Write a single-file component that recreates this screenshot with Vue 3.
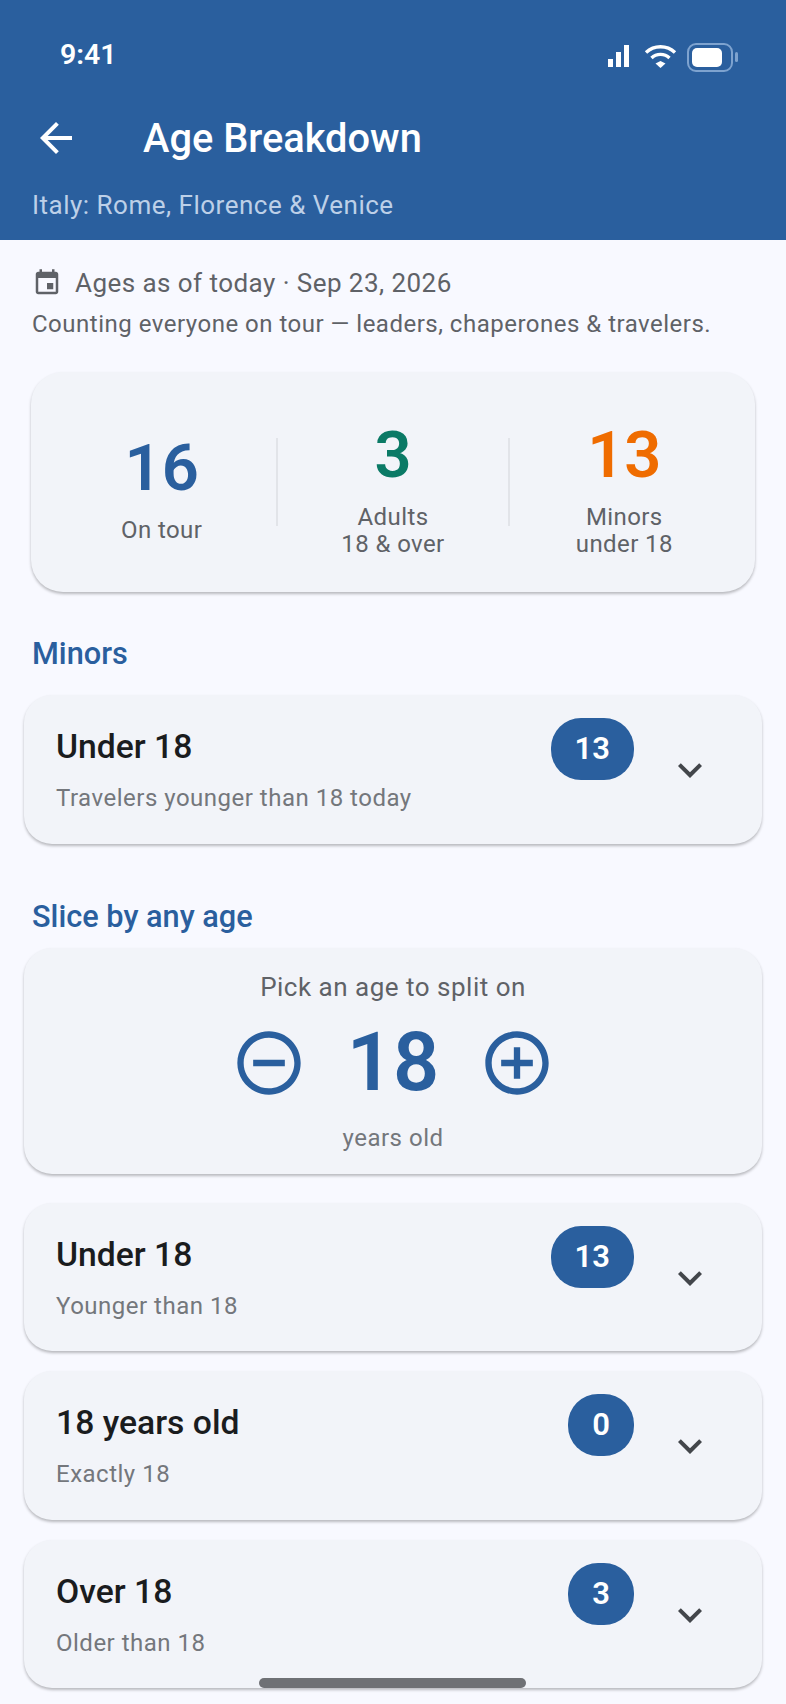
<script setup>
const stats = [
  { value: '16', lines: ['On tour'], tone: 'blue' },
  { value: '3', lines: ['Adults', '18 & over'], tone: 'green' },
  { value: '13', lines: ['Minors', 'under 18'], tone: 'orange' },
]
const slices = [
  { title: 'Under 18', sub: 'Younger than 18', count: '13' },
  { title: '18 years old', sub: 'Exactly 18', count: '0' },
  { title: 'Over 18', sub: 'Older than 18', count: '3' },
]
</script>

<template>
  <div class="page">
    <header class="header">
      <div class="status">
        <span class="time">9:41</span>
        <svg class="status-icons" width="132" height="30" viewBox="0 0 132 30">
          <rect x="0" y="16" width="5" height="8" fill="#fff" />
          <rect x="8" y="9" width="5" height="15" fill="#fff" />
          <rect x="16" y="2" width="5" height="22" fill="#fff" />
          <path d="M38 9.5a21 21 0 0 1 29 0" fill="none" stroke="#fff" stroke-width="3.4" />
          <path d="M43.5 15a13 13 0 0 1 18 0" fill="none" stroke="#fff" stroke-width="3.4" />
          <path d="M47.5 20.5l5-2.6 5 2.6-5 4.5z" fill="#fff" />
          <rect x="80" y="1" width="44" height="27" rx="8" fill="none" stroke="#7ea3cf" stroke-width="2" />
          <rect x="84" y="5" width="30" height="19" rx="5" fill="#fff" />
          <rect x="127" y="9" width="3" height="10" rx="1.5" fill="#7ea3cf" />
        </svg>
      </div>
      <div class="bar">
        <svg class="back" width="48" height="48" viewBox="0 0 24 24">
          <path fill="#fff" d="M20 11H7.83l5.59-5.59L12 4l-8 8 8 8 1.41-1.41L7.83 13H20v-2z" />
        </svg>
        <h1 class="title">Age Breakdown</h1>
      </div>
      <p class="trip">Italy: Rome, Florence &amp; Venice</p>
    </header>

    <main class="content">
      <div class="date">
        <svg width="30" height="30" viewBox="0 0 24 24">
          <path fill="#5f6267" d="M17 12h-5v5h5v-5zM16 1v2H8V1H6v2H5c-1.11 0-1.99.9-1.99 2L3 19c0 1.1.89 2 2 2h14c1.1 0 2-.9 2-2V5c0-1.1-.9-2-2-2h-1V1h-2zm3 18H5V8h14v11z" />
        </svg>
        <span>Ages as of today · Sep 23, 2026</span>
      </div>
      <p class="counting">Counting everyone on tour — leaders, chaperones &amp; travelers.</p>

      <section class="card summary">
        <template v-for="(s, i) in stats" :key="s.value">
          <div v-if="i" class="divider"></div>
          <div class="stat">
            <div class="num" :class="s.tone">{{ s.value }}</div>
            <div class="label">
              <div v-for="l in s.lines" :key="l">{{ l }}</div>
            </div>
          </div>
        </template>
      </section>

      <h2 class="heading minors">Minors</h2>
      <section class="card tile">
        <div class="tile-text">
          <div class="tile-title">Under 18</div>
          <div class="tile-sub">Travelers younger than 18 today</div>
        </div>
        <div class="badge">13</div>
        <svg class="chev" width="48" height="48" viewBox="0 0 24 24">
          <path fill="#43464b" d="M16.59 8.59L12 13.17 7.41 8.59 6 10l6 6 6-6z" />
        </svg>
      </section>

      <h2 class="heading slice">Slice by any age</h2>
      <section class="card stepper">
        <div class="pick">Pick an age to split on</div>
        <div class="step-row">
          <svg width="76" height="76" viewBox="0 0 24 24">
            <path fill="#2a5f9e" d="M7 11v2h10v-2H7zm5-9C6.48 2 2 6.48 2 12s4.48 10 10 10 10-4.48 10-10S17.52 2 12 2zm0 18c-4.41 0-8-3.59-8-8s3.59-8 8-8 8 3.59 8 8-3.59 8-8 8z" />
          </svg>
          <div class="age">18</div>
          <svg width="76" height="76" viewBox="0 0 24 24">
            <path fill="#2a5f9e" d="M13 7h-2v4H7v2h4v4h2v-4h4v-2h-4V7zm-1-5C6.48 2 2 6.48 2 12s4.48 10 10 10 10-4.48 10-10S17.52 2 12 2zm0 18c-4.41 0-8-3.59-8-8s3.59-8 8-8 8 3.59 8 8-3.59 8-8 8z" />
          </svg>
        </div>
        <div class="years">years old</div>
      </section>

      <section v-for="(s, i) in slices" :key="s.title" class="card tile" :class="i ? 'tile-next' : 'tile-first'">
        <div class="tile-text">
          <div class="tile-title">{{ s.title }}</div>
          <div class="tile-sub">{{ s.sub }}</div>
        </div>
        <div class="badge">{{ s.count }}</div>
        <svg class="chev" width="48" height="48" viewBox="0 0 24 24">
          <path fill="#43464b" d="M16.59 8.59L12 13.17 7.41 8.59 6 10l6 6 6-6z" />
        </svg>
      </section>
    </main>

    <div class="home"></div>
  </div>
</template>

<style>
html, body { margin: 0; background: #f8f9ff; }
</style>

<style scoped>
.page {
  position: relative;
  width: 786px;
  height: 1704px;
  overflow: hidden;
  background: #f8f9ff;
  font-family: Roboto, "Liberation Sans", sans-serif;
  color: #5f6267;
}
.header {
  height: 240px;
  box-sizing: border-box;
  background: #2a5f9e;
  color: #fff;
  padding-top: 35px;
}
.status {
  height: 40px;
  display: flex;
  align-items: center;
  justify-content: space-between;
  padding: 0 46px 0 60px;
}
.time { font-size: 28.5px; font-weight: 600; line-height: 40px; }
.status-icons { margin-top: 5px; }
.bar {
  display: flex;
  align-items: center;
  height: 56px;
  margin-top: 35px;
  padding-left: 32px;
}
.title {
  margin: 2px 0 0 63px;
  font-size: 39.8px;
  font-weight: 500;
  line-height: 56px;
}
.trip {
  margin: 23px 0 0 32px;
  font-size: 26px;
  line-height: 32px;
  color: #bdd0e8;
  letter-spacing: 0.5px;
}
.date {
  display: flex;
  align-items: center;
  gap: 13px;
  height: 36px;
  margin: 25px 0 0 32px;
  font-size: 26px;
  letter-spacing: 0.45px;
}
.counting {
  margin: 7px 0 0 32px;
  font-size: 24px;
  line-height: 32px;
  letter-spacing: 0.5px;
}
.card {
  background: #f2f4f9;
  border-radius: 28px;
  box-shadow: 0 2px 3px rgba(0, 0, 0, 0.26);
}
.summary {
  display: flex;
  align-items: center;
  box-sizing: border-box;
  height: 220px;
  margin: 32px 31px 0;
  padding: 41px 16px 34px;
  border-radius: 32px;
}
.stat { flex: 1; text-align: center; }
.divider {
  width: 2px;
  height: 88px;
  margin-bottom: 7px;
  background: #e2e4e9;
}
.num { font-size: 65px; font-weight: 600; line-height: 82px; }
.blue { color: #2a5f9e; }
.green { color: #0b7a66; }
.orange { color: #ef6c00; }
.label {
  margin-top: 8px;
  font-size: 24px;
  line-height: 27px;
  letter-spacing: 0.4px;
}
.heading {
  margin: 0 0 0 32px;
  font-size: 30.7px;
  font-weight: 500;
  line-height: 40px;
  color: #2a5f9e;
}
.minors { margin-top: 42px; margin-bottom: -1px; }
.slice { margin-top: 53px; }
.tile {
  display: flex;
  box-sizing: border-box;
  height: 148.5px;
  margin: 0 24px;
  padding: 31px 48px 0 32px;
}
.minors + .tile { margin-top: 22px; }
.tile-first { margin-top: 29px; }
.tile-next { margin-top: 20px; }
.tile-text { flex: 1; }
.tile-title {
  font-size: 33.7px;
  font-weight: 500;
  line-height: 42px;
  color: #1a1c1e;
}
.tile-sub {
  margin-top: 13px;
  font-size: 24px;
  line-height: 34px;
  letter-spacing: 0.5px;
  color: #74777c;
}
.badge {
  align-self: flex-start;
  height: 62px;
  margin-top: -8px;
  padding: 0 24px;
  border-radius: 30px;
  background: #2a5f9e;
  color: #fff;
  font-size: 31px;
  font-weight: 600;
  line-height: 62px;
  text-align: center;
}
.chev { align-self: center; margin: -29px 0 0 32px; }
.stepper {
  box-sizing: border-box;
  height: 226px;
  margin: 11px 24px 0;
  padding-top: 22px;
  text-align: center;
}
.pick { font-size: 26px; line-height: 34px; letter-spacing: 0.5px; }
.step-row {
  display: flex;
  align-items: center;
  justify-content: center;
  height: 80px;
  margin-top: 19px;
}
.age {
  width: 172px;
  font-size: 81px;
  font-weight: 600;
  line-height: 80px;
  color: #2a5f9e;
}
.years {
  margin-top: 19px;
  font-size: 24px;
  line-height: 32px;
  letter-spacing: 0.5px;
  color: #74777c;
}
.home {
  position: absolute;
  left: 259px;
  top: 1678px;
  width: 267px;
  height: 10px;
  border-radius: 5px;
  background: #6f7175;
}
</style>
